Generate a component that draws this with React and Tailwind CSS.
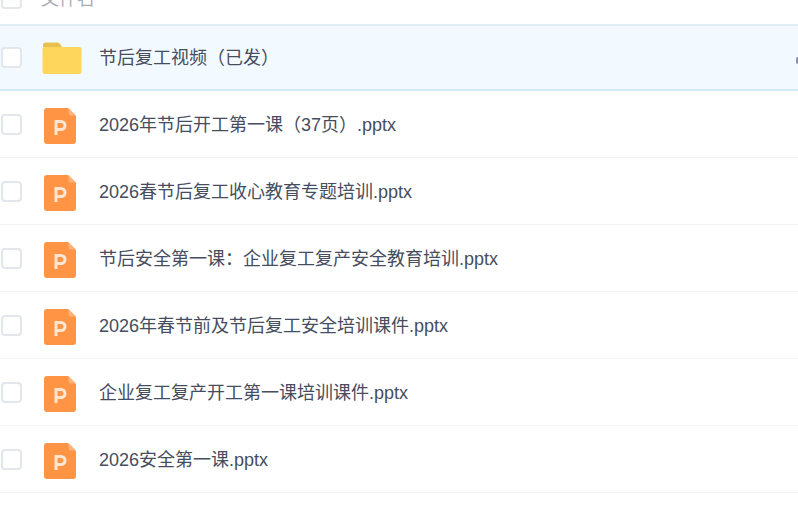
const files = [
  "2026年节后开工第一课（37页）.pptx",
  "2026春节后复工收心教育专题培训.pptx",
  "节后安全第一课：企业复工复产安全教育培训.pptx",
  "2026年春节前及节后复工安全培训课件.pptx",
  "企业复工复产开工第一课培训课件.pptx",
  "2026安全第一课.pptx",
];

function Check() {
  return <span className="ml-px h-[21px] w-[21px] shrink-0 rounded-[4px] border-2 border-[#e3e6eb] bg-white" />;
}

function Folder() {
  return (
    <svg width="40" height="32" viewBox="0 0 40 32" className="ml-5 shrink-0">
      <path d="M1 3a2.500 2.500 0 0 1 2.500-2.500h12a3 3 0 0 1 2.500 1.500L20 5H1z" fill="#e8c04e" />
      <rect x="0.500" y="5" width="39" height="27" rx="2" fill="#ffd65c" />
    </svg>
  );
}

function Ppt() {
  return (
    <svg width="32" height="36" viewBox="0 0 32 36" className="ml-[22px] mr-[1px] mt-[4px] shrink-0">
      <path d="M3 0h21l8 8v25a3 3 0 0 1-3 3H3a3 3 0 0 1-3-3V3a3 3 0 0 1 3-3z" fill="#ff9544" />
      <path d="M24.500 0l7.500 7.500h-5.500a2 2 0 0 1-2-2z" fill="#ffb27a" />
      <path d="M12 27V13.500h5a4 4 0 0 1 0 8h-5" fill="none" stroke="#ffe6d3" strokeWidth="3" />
    </svg>
  );
}

export default function App() {
  return (
    <div className="h-[516px] w-[798px] overflow-hidden bg-white font-['Liberation_Sans','Noto_Sans_CJK_SC',sans-serif] text-[18px] text-[#454d5e]">
      <div className="-mt-[28px] flex h-[52px] items-center">
        <Check />
        <span className="ml-[18px] mt-[2px] pl-px text-[#a9adb8]">文件名</span>
      </div>
      <div className="relative flex h-[67px] items-center border-y-2 border-t-[#e1edf5] border-b-[#d5e9f5] bg-[#f3faff]">
        <Check />
        <Folder />
        <span className="ml-[17px] mt-[2px]">节后复工视频（已发）</span>
        <span className="absolute right-0 top-[31px] h-[7px] w-[2px] rounded-l bg-[#8d8fa8]" />
      </div>
      {files.map((f) => (
        <div key={f} className="flex h-[67px] items-center border-b border-[#f1f2f4]">
          <Check />
          <Ppt />
          <span className="ml-[22px] mt-[2px]">{f}</span>
        </div>
      ))}
    </div>
  );
}
